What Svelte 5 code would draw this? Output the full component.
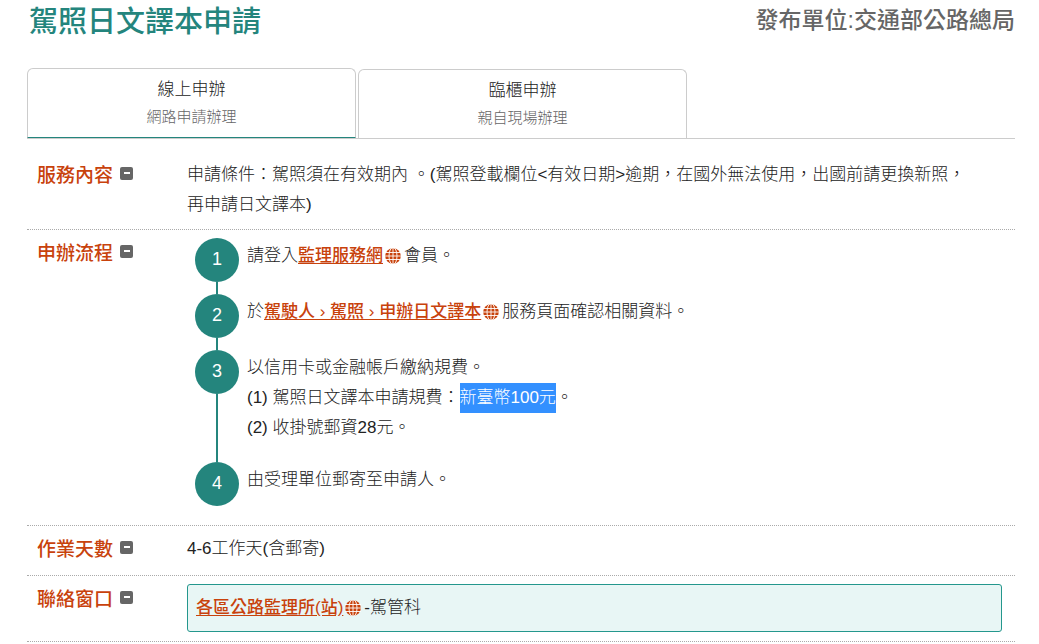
<script lang="ts">
	type SectionId = 'service' | 'process' | 'days' | 'contact';

	const tabs = [
		{ id: 'online', title: '線上申辦', note: '網路申請辦理' },
		{ id: 'counter', title: '臨櫃申辦', note: '親自現場辦理' }
	];

	const sections: { id: SectionId; label: string }[] = [
		{ id: 'service', label: '服務內容' },
		{ id: 'process', label: '申辦流程' },
		{ id: 'days', label: '作業天數' },
		{ id: 'contact', label: '聯絡窗口' }
	];

	let activeTab = $state('online');
	let open = $state<Record<SectionId, boolean>>({
		service: true,
		process: true,
		days: true,
		contact: true
	});
</script>

{#snippet siteLink(text: string)}
	<a href="#site">{text}</a><svg class="globe" viewBox="0 0 16 16" aria-hidden="true">
		<circle cx="8" cy="8" r="7.8" fill="#c8420c" />
		<g fill="none" stroke="#fff" stroke-width="0.9">
			<path d="M8 0v16M0 4.5h16M0 8h16M0 11.5h16" />
			<ellipse cx="8" cy="8" rx="4" ry="8.5" />
		</g>
	</svg>
{/snippet}

<main lang="zh-Hant">
	<header>
		<h1>駕照日文譯本申請</h1>
		<p class="publisher">發布單位:交通部公路總局</p>
	</header>

	<div class="tabs" role="tablist">
		{#each tabs as tab (tab.id)}
			<button
				class="tab"
				class:active={activeTab === tab.id}
				role="tab"
				aria-selected={activeTab === tab.id}
				onclick={() => (activeTab = tab.id)}
			>
				<span class="tab-title">{tab.title}</span>
				<span class="tab-note">{tab.note}</span>
			</button>
		{/each}
	</div>

	<div class="sections">
		{#each sections as section (section.id)}
			<section class="row">
				<h2>
					{section.label}
					<button
						class="toggle"
						aria-label={section.label}
						aria-expanded={open[section.id]}
						onclick={() => (open[section.id] = !open[section.id])}
					>
						<svg viewBox="0 0 13 13" aria-hidden="true">
							<path d="M4 5h6v2H4z" fill="#fff" />
							{#if !open[section.id]}
								<path d="M6 3h2v6H6z" fill="#fff" />
							{/if}
						</svg>
					</button>
				</h2>
				{#if open[section.id]}
					<div class="content">
						{#if section.id === 'service'}
							<p>
								申請條件：駕照須在有效期內 。(駕照登載欄位&lt;有效日期&gt;逾期，在國外無法使用，出國前請更換新照，<br
								/>再申請日文譯本)
							</p>
						{:else if section.id === 'process'}
							<ol>
								<li><p>請登入{@render siteLink('監理服務網')}會員。</p></li>
								<li>
									<p>
										於{@render siteLink('駕駛人 › 駕照 › 申辦日文譯本')}服務頁面確認相關資料。
									</p>
								</li>
								<li>
									<p>
										以信用卡或金融帳戶繳納規費。<br />
										(1) 駕照日文譯本申請規費：<mark>新臺幣100元</mark>。<br />
										(2) 收掛號郵資28元。
									</p>
								</li>
								<li><p>由受理單位郵寄至申請人。</p></li>
							</ol>
						{:else if section.id === 'days'}
							<p>4-6工作天(含郵寄)</p>
						{:else}
							<p class="contact">{@render siteLink('各區公路監理所(站)')}-駕管科</p>
						{/if}
					</div>
				{/if}
			</section>
		{/each}
	</div>
</main>

<style>
	:global(body) {
		margin: 0;
		background: #fff;
	}

	main {
		padding: 0 24px 0 27px;
		font-family: 'Liberation Sans', 'Noto Sans CJK TC', sans-serif;
		font-size: 17px;
		font-weight: 300;
		line-height: 30px;
		color: #222;
	}

	h1,
	h2,
	p,
	ol {
		margin: 0;
		padding: 0;
	}

	header {
		display: flex;
		justify-content: space-between;
		height: 68px;
		line-height: 40px;
	}

	h1 {
		padding-left: 2px;
		font-size: 29px;
		font-weight: 500;
		line-height: 44px;
		color: #24857d;
	}

	.publisher {
		font-size: 23px;
		font-weight: 500;
		color: #666;
	}

	.tabs {
		display: flex;
		align-items: flex-end;
		gap: 2px;
		border-bottom: 1px solid #ccc;
	}

	.tab {
		display: flex;
		flex-direction: column;
		align-items: center;
		width: 33.3%;
		padding: 7px 0;
		border: 1px solid #ccc;
		border-bottom: 0;
		border-radius: 6px 6px 0 0;
		background: #fff;
		font: inherit;
		color: inherit;
		cursor: pointer;
	}

	.tab.active {
		border-bottom: 1px solid #24857d;
	}

	.tab-title {
		line-height: 28px;
	}

	.tab-note {
		font-size: 15px;
		line-height: 26px;
		color: #666;
	}

	.sections {
		padding-top: 13px;
	}

	.row {
		display: flex;
		min-height: 50px;
		box-sizing: border-box;
		padding: 8px 13px 9px 10px;
		border-bottom: 1px dotted #aaa;
	}

	h2 {
		display: flex;
		gap: 7px;
		flex: 0 0 150px;
		font-size: 19px;
		font-weight: 500;
		line-height: 32px;
		color: #c8420c;
	}

	.toggle {
		width: 13px;
		height: 13px;
		margin-top: 7px;
		padding: 0;
		border: 0;
		border-radius: 2px;
		background: #666;
		cursor: pointer;
	}

	.toggle svg {
		display: block;
	}

	.content {
		flex: 1;
		min-width: 0;
	}

	a {
		font-weight: 500;
		color: #c8420c;
		text-underline-offset: 2px;
	}

	.globe {
		width: 16px;
		height: 16px;
		margin: 0 3px 0 2px;
		vertical-align: -3px;
	}

	ol {
		padding: 0 0 10px 8px;
		list-style: none;
		counter-reset: step;
	}

	li {
		display: grid;
		grid-template-columns: 44px 1fr;
		grid-template-rows: 44px 1fr;
		column-gap: 8px;
		min-height: 56px;
		counter-increment: step;
	}

	li::before {
		content: counter(step);
		border-radius: 50%;
		background: #24857d;
		font-size: 18px;
		font-weight: 400;
		line-height: 42px;
		text-align: center;
		color: #fff;
	}

	li::after {
		content: '';
		grid-area: 2 / 1;
		justify-self: center;
		width: 2px;
		background: #24857d;
	}

	li p {
		grid-area: 1 / 2 / 3 / 3;
		padding: 3px 0 19px;
	}

	li:last-child {
		min-height: 44px;
	}

	li:last-child p {
		padding-bottom: 0;
	}

	li:last-child::after {
		content: none;
	}

	mark {
		display: inline-block;
		background: #3390ff;
		color: #fff;
	}

	.contact {
		padding: 8px 8px;
		border: 1px solid #24978d;
		border-radius: 3px;
		background: #e8f6f5;
	}
</style>
